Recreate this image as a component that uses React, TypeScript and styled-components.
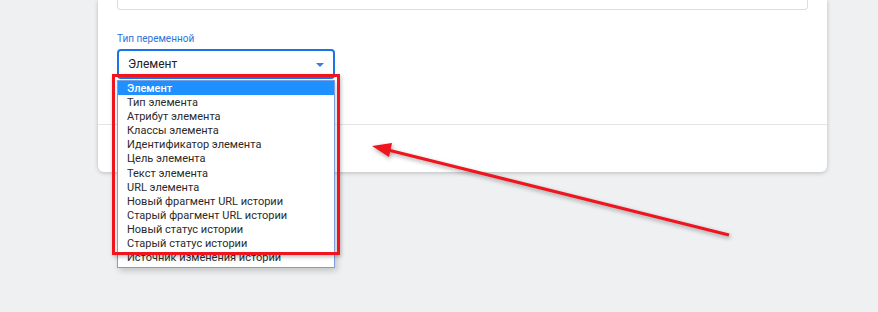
import { FC } from 'react';
import styled, { createGlobalStyle } from 'styled-components';

const GlobalStyle = createGlobalStyle`
html, body {
margin:0;
padding:0;
}
body {
background:#eff0f2;
font-family:Roboto, "Liberation Sans", sans-serif;
}
`;
/*----------Page--------------------*/
const Page = styled.div`
position:relative;
width:878px;
height:312px;
overflow:hidden;
background:#eff0f2;
`;
/*----------Card--------------------*/
const Card = styled.div`
margin-left:98px;
width:729px;
height:172px;
background:#fff;
border-radius:0 0 6px 6px;
box-shadow:0 1px 4px rgba(0,0,0,0.22);
display:flex;
flex-direction:column;
`;
const CardBody = styled.div`
display:flex;
flex-direction:column;
padding:0 19px;
height:125px;
box-sizing:border-box;
border-bottom:1px solid #e3e4e6;
`;
const InputBox = styled.div`
height:10px;
border:1px solid #dcdde0;
border-top:none;
border-radius:0 0 4px 4px;
box-sizing:border-box;
`;
const Label = styled.div`
margin-top:22px;
font-size:10px;
line-height:14px;
color:#2f73d8;
`;
const SelectWrap = styled.div`
position:relative;
margin-top:3px;
width:218px;
`;
const Select = styled.div`
height:30px;
box-sizing:border-box;
border:2px solid #1a73e8;
border-radius:4px;
display:flex;
align-items:center;
justify-content:space-between;
padding:0 9px 0 9px;
font-size:12px;
color:#202124;
`;
const Caret = styled.span`
width:0;
height:0;
border-left:4px solid transparent;
border-right:4px solid transparent;
border-top:4px solid #3b7be0;
margin-top:1px;
`;
/*----------Dropdown list--------------------*/
const List = styled.div`
position:absolute;
left:0;
top:31px;
width:218px;
box-sizing:border-box;
border:1px solid #7c9ed6;
background:#fff;
padding-bottom:3px;
box-shadow:2px 3px 6px rgba(0,0,0,0.18);
`;
const Item = styled.div<{ $active?: boolean }>`
height:14.1px;
line-height:16px;
padding-left:9px;
font-size:11px;
white-space:nowrap;
color:${p => (p.$active ? '#fff' : '#2a2a2a')};
background:${p => (p.$active ? '#1e90ff' : 'transparent')};
font-weight:${p => (p.$active ? 500 : 400)};
`;
/*----------Annotations--------------------*/
const Highlight = styled.div`
position:absolute;
left:112px;
top:74px;
width:228px;
height:181px;
box-sizing:border-box;
border:3px solid #f0141e;
box-shadow:1px 2px 4px rgba(0,0,0,0.25);
pointer-events:none;
`;
const ArrowSvg = styled.svg`
position:absolute;
left:0;
top:0;
pointer-events:none;
filter:drop-shadow(1px 2px 2px rgba(0,0,0,0.35));
`;

const items = [
    'Элемент',
    'Тип элемента',
    'Атрибут элемента',
    'Классы элемента',
    'Идентификатор элемента',
    'Цель элемента',
    'Текст элемента',
    'URL элемента',
    'Новый фрагмент URL истории',
    'Старый фрагмент URL истории',
    'Новый статус истории',
    'Старый статус истории',
    'Источник изменения истории',
];

const App: FC = () => {
    return (
        <Page>
            <GlobalStyle />
            <Card>
                <CardBody>
                    <InputBox />
                    <Label>Тип переменной</Label>
                    <SelectWrap>
                        <Select>
                            <span>Элемент</span>
                            <Caret />
                        </Select>
                        <List>
                            {items.map((t, i) => (
                                <Item key={t} $active={i === 0}>{t}</Item>
                            ))}
                        </List>
                    </SelectWrap>
                </CardBody>
            </Card>

            <Highlight />

            <ArrowSvg width="878" height="312" viewBox="0 0 878 312">
                <line x1="729" y1="235" x2="388" y2="150" stroke="#f0141e" strokeWidth="3" />
                <polygon points="372,146 392,143 389,157" fill="#f0141e" />
            </ArrowSvg>
        </Page>
    );
};

export default App;
